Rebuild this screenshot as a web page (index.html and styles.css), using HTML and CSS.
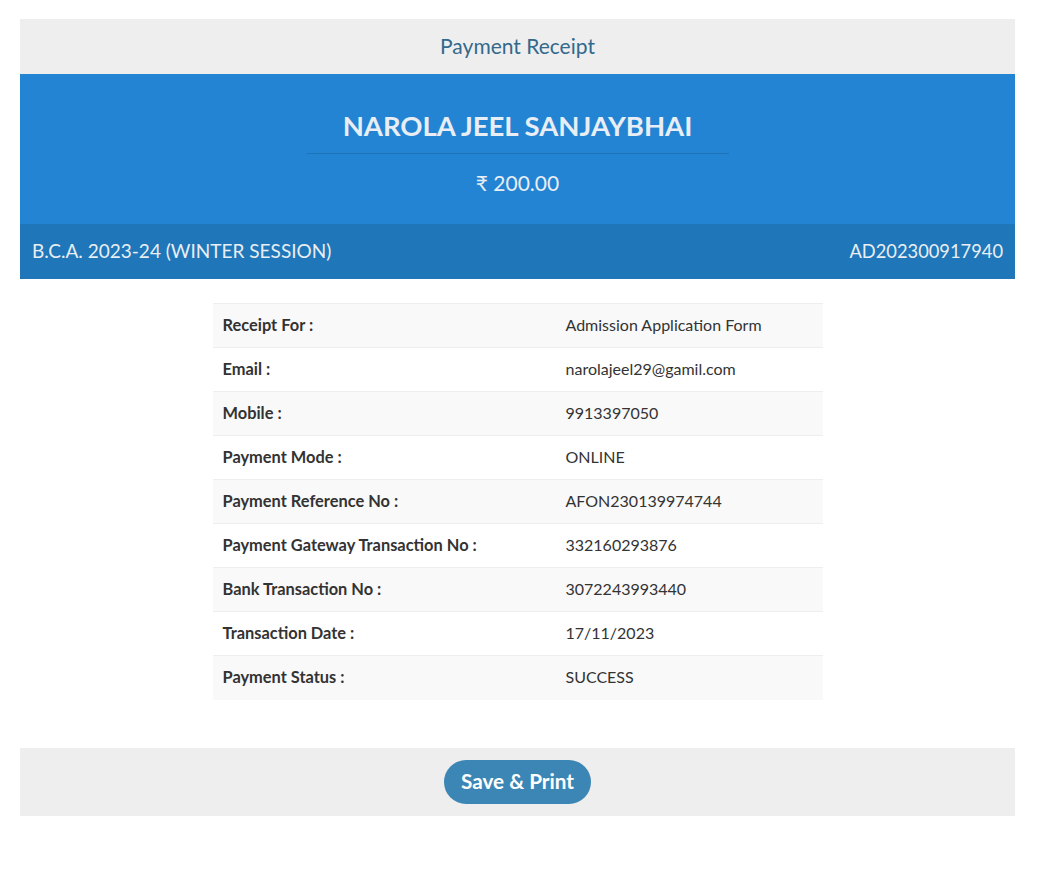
FILE: index.html
```html
<!DOCTYPE html>
<html>
<head>
<meta charset="utf-8">
<link rel="stylesheet" href="styles.css">
</head>
<body>
<div class="receipt">
  <div class="title-bar">Payment Receipt</div>
  <div class="hero">
    <h1 class="name">NAROLA JEEL SANJAYBHAI</h1>
    <div class="divider"></div>
    <div class="amount">₹ 200.00</div>
  </div>
  <div class="course-bar">
    <span>B.C.A. 2023-24 (WINTER SESSION)</span>
    <span class="app-no">AD202300917940</span>
  </div>
  <div class="details">
    <table class="info">
      <tr><th>Receipt For :</th><td>Admission Application Form</td></tr>
      <tr><th>Email :</th><td>narolajeel29@gamil.com</td></tr>
      <tr><th>Mobile :</th><td>9913397050</td></tr>
      <tr><th>Payment Mode :</th><td>ONLINE</td></tr>
      <tr><th>Payment Reference No :</th><td>AFON230139974744</td></tr>
      <tr><th>Payment Gateway Transaction No :</th><td>332160293876</td></tr>
      <tr><th>Bank Transaction No :</th><td>3072243993440</td></tr>
      <tr><th>Transaction Date :</th><td>17/11/2023</td></tr>
      <tr><th>Payment Status :</th><td>SUCCESS</td></tr>
    </table>
  </div>
  <div class="footer-bar">
    <button class="print-btn">Save &amp; Print</button>
  </div>
</div>
</body>
</html>
```
FILE: styles.css
```css
* { box-sizing: border-box; }
html, body { margin: 0; padding: 0; background: #fff; }
body {
  font-family: "Lato", "DejaVu Sans", sans-serif;
  color: #333;
  padding: 19px 26px 0 20px;
}
.receipt { width: 995px; }
.title-bar {
  background: #eeeeee;
  height: 55px;
  display: flex;
  align-items: center;
  justify-content: center;
  color: #33698c;
  font-size: 21px;
  padding-bottom: 3px;
}
.hero {
  background: #2384d3;
  height: 150px;
  display: flex;
  flex-direction: column;
  align-items: center;
  padding-top: 34px;
  color: #e8eef3;
}
.name {
  margin: 0;
  font-size: 27.5px;
  font-weight: 700;
  line-height: 36px;
}
.divider {
  width: 422px;
  height: 1px;
  background: #1e73b7;
  margin-top: 9px;
}
.amount {
  font-size: 21px;
  margin-top: 15px;
  line-height: 28px;
}
.course-bar {
  background: #1f76b9;
  height: 55px;
  display: flex;
  align-items: center;
  justify-content: space-between;
  padding: 0 12px 2px;
  color: #e8eef3;
  font-size: 19px;
}
.app-no { font-size: 18.3px; }
.details {
  padding: 24px 0 48px;
  display: flex;
  justify-content: center;
}
.info {
  width: 610px;
  border-collapse: collapse;
}
.info th, .info td {
  height: 44px;
  padding: 0 10px 3px;
  text-align: left;
  vertical-align: middle;
  border-top: 1px solid #eeeeee;
  color: #333;
}
.info th { width: 343px; font-weight: 700; font-size: 16.4px; }
.info td { font-weight: 400; font-size: 16px; }
.info tr:nth-child(odd) { background: #f9f9f9; }
.footer-bar {
  background: #eeeeee;
  height: 68px;
  display: flex;
  align-items: center;
  justify-content: center;
}
.print-btn {
  font-family: "Lato", sans-serif;
  background: #3c86b6;
  color: #fff;
  border: none;
  border-radius: 22px;
  width: 147px;
  height: 44px;
  font-size: 20.7px;
  font-weight: 700;
  padding: 0 0 2px;
}
```
